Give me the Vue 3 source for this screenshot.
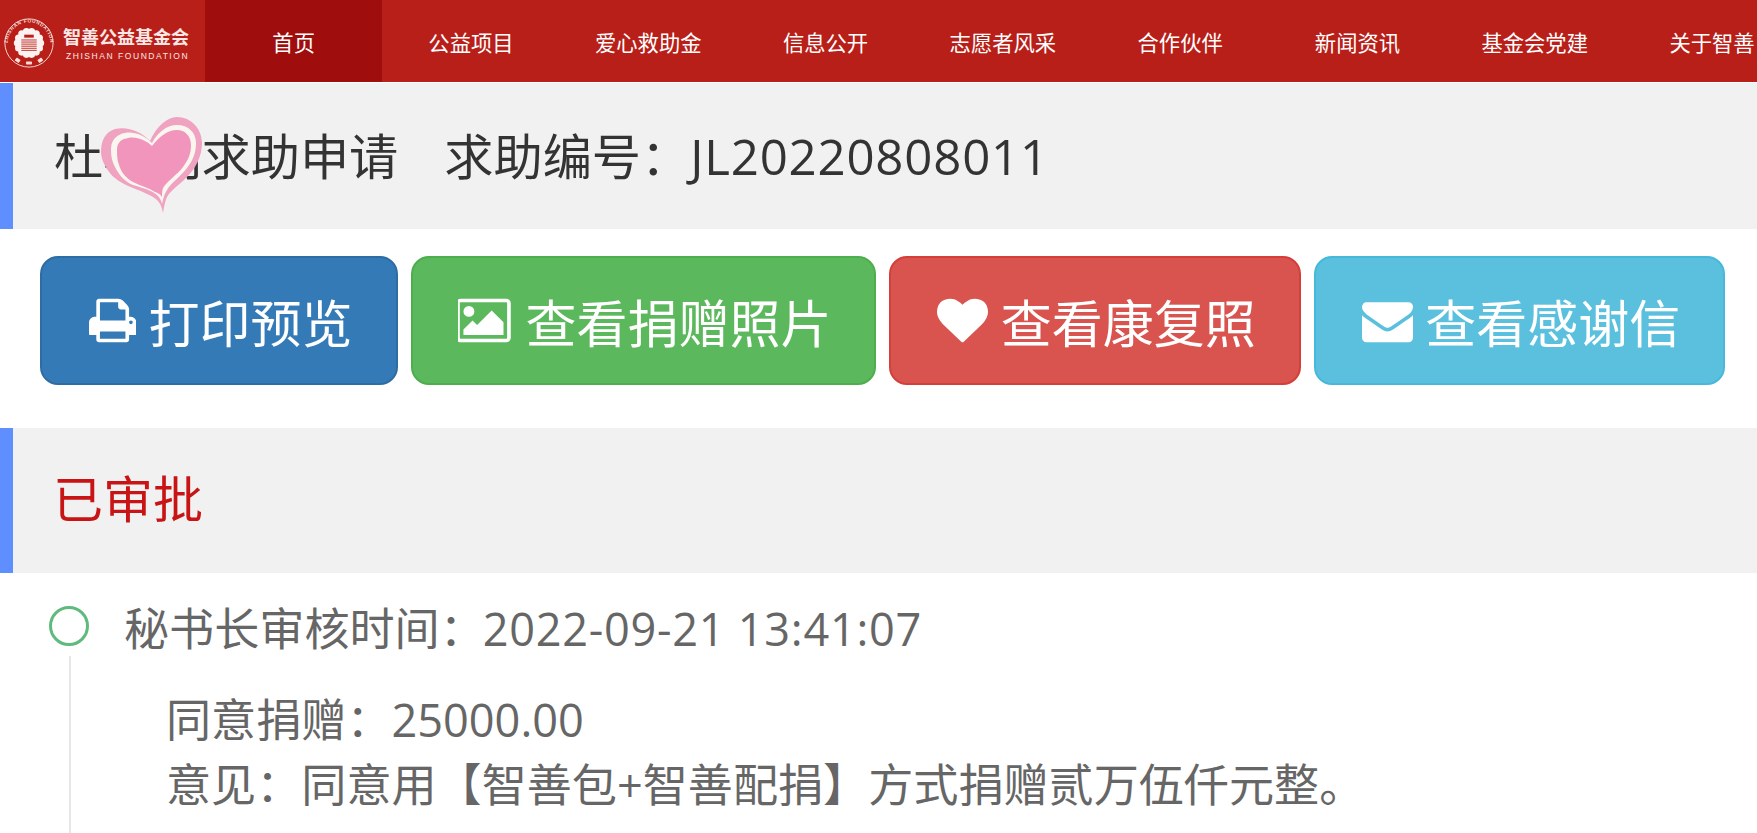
<script setup>
const navItems = ['首页', '公益项目', '爱心救助金', '信息公开', '志愿者风采', '合作伙伴', '新闻资讯', '基金会党建', '关于智善']

const buttons = [
  {
    label: '打印预览',
    type: 'primary',
    box: '64 0 1664 1792',
    width: 47.400,
    d: 'M448 1536h896v-256h-896v256zm0-640h896v-384h-160q-40 0-68-28t-28-68v-160h-640v640zm1152 64q0-26-19-45t-45-19-45 19-19 45 19 45 45 19 45-19 19-45zm128 0v416q0 13-9.500 22.500t-22.500 9.500h-224v160q0 40-28 68t-68 28h-960q-40 0-68-28t-28-68v-160h-224q-13 0-22.500-9.500t-9.500-22.500v-416q0-79 56.500-135.500t135.500-56.500h64v-544q0-40 28-68t68-28h672q40 0 88 20t76 48l152 152q28 28 48 76t20 88v256h64q79 0 135.500 56.500t56.500 135.500z',
  },
  {
    label: '查看捐赠照片',
    type: 'success',
    box: '0 0 1920 1792',
    width: 54.600,
    d: 'M576 576q0 80-56 136t-136 56-136-56-56-136 56-136 136-56 136 56 56 136zm1024 384v448h-1408v-192l320-320 160 160 512-512zm96-704h-1600q-13 0-22.500 9.500t-9.500 22.500v1216q0 13 9.500 22.500t22.500 9.500h1600q13 0 22.500-9.500t9.500-22.500v-1216q0-13-9.500-22.500t-22.500-9.500zm160 32v1216q0 66-47 113t-113 47h-1600q-66 0-113-47t-47-113v-1216q0-66 47-113t113-47h1600q66 0 113 47t47 113z',
  },
  {
    label: '查看康复照',
    type: 'danger',
    box: '0 0 1792 1792',
    width: 51,
    d: 'M896 1664q-26 0-44-18l-624-602q-10-8-27.500-26t-55.500-65.500-68-97.500-53.500-121-23.500-138q0-220 127-344t351-124q62 0 126.500 21.500t120 58 95.500 68.500 76 68q36-36 76-68t95.500-68.500 120-58 126.500-21.500q224 0 351 124t127 344q0 221-229 450l-623 600q-18 18-44 18z',
  },
  {
    label: '查看感谢信',
    type: 'info',
    box: '0 0 1792 1792',
    width: 51,
    d: 'M1792 710v794q0 66-47 113t-113 47h-1472q-66 0-113-47t-47-113v-794q44 49 101 87 362 246 497 345 57 42 92.500 65.500t94.500 48 110 24.500h2q51 0 110-24.500t94.500-48 92.500-65.500q170-123 498-345 57-39 100-87zm0-294q0 79-49 151t-122 123q-376 261-468 325-10 7-42.500 30.500t-54 38-52 32.500-57.500 27-50 9h-2q-23 0-50-9t-57.500-27-52-32.500-54-38-42.500-30.500q-91-64-262-182.500t-205-142.500q-62-42-117-115.500t-55-136.500q0-78 41.500-130t118.500-52h1472q65 0 112.500 47t47.500 113z',
  },
]

// stripes inside the seal
const sealLines = [36, 39.5, 43, 46.5, 50, 53.5]

// scalloped edge of the seal centre
const lobes = Array.from({ length: 14 }, (_, i) => {
  const a = (i / 14) * Math.PI * 2
  return { x: 42 + Math.cos(a) * 19.5, y: 42 + Math.sin(a) * 19.5 }
})
</script>

<template>
  <div class="page">
    <!-- top nav -->
    <header class="nav">
      <div class="logo">
        <svg class="seal" viewBox="0 0 84 84" width="50" height="50">
          <defs>
            <path id="seal-arc" d="M7 52 A36 36 0 1 1 77 52" />
          </defs>
          <circle cx="42" cy="42" r="40.500" fill="none" stroke="#f6dcd8" stroke-width="1.6" />
          <text class="seal-text" fill="#f6dcd8">
            <textPath href="#seal-arc" startOffset="50%" text-anchor="middle">ZHISHAN FOUNDATION</textPath>
          </text>
          <!-- three small stamps at the foot of the ring -->
          <rect x="19" y="68" width="8" height="6" rx="1" fill="#f6dcd8" transform="rotate(35 23 71)" />
          <rect x="37" y="73" width="10" height="5" rx="1" fill="#f6dcd8" />
          <rect x="57" y="68" width="8" height="6" rx="1" fill="#f6dcd8" transform="rotate(-35 61 71)" />
          <circle v-for="(p, i) in lobes" :key="i" :cx="p.x" :cy="p.y" r="6" fill="#fbf3f1" />
          <circle cx="42" cy="42" r="21" fill="#fbf3f1" />
          <rect x="34" y="28" width="16" height="5" fill="#b9201a" />
          <rect v-for="y in sealLines" :key="y" x="29" :y="y" width="26" height="1.800" fill="#c9453f" />
        </svg>
        <div class="logo-words">
          <div class="logo-cn">智善公益基金会</div>
          <div class="logo-en">ZHISHAN FOUNDATION</div>
        </div>
      </div>
      <nav class="nav-list">
        <a v-for="(item, i) in navItems" :key="item" class="nav-item" :class="{ active: i === 0 }">{{ item }}</a>
      </nav>
    </header>

    <!-- title -->
    <section class="band title-band">
      <h1 class="title">杜小明求助申请<span class="title-no">求助编号：<span class="latin">JL20220808011</span></span></h1>
      <svg class="heart" viewBox="0 0 102 97" width="102" height="97">
        <path
          d="M49 24 C55 10 66 0 76 0 C90 0 101 12 101 26 C101 40 94 52 86 60 C78 68 69 74 66 80 C64 84 63 90 62 96 C61 91 60 87 56 83 C50 78 42 75 32 71 C22 67 12 62 6 52 C2 46 0 40 0 35 C0 24 4 15 14 12 C26 9 40 14 49 24 Z"
          fill="#f0a2c1"
        />
        <path
          d="M51 26 C57 15 66 8 76 8 C87 8 95 15 95 26 C95 36 92 43 86 51 C80 59 70 66 66 73 C63 78 62 82 61 87 C60 83 59 81 56 78 C50 73 42 71 32 68 C24 65 18 58 14 50 C11 45 10 39 10 33 C10 25 13 20 20 17 C30 13 42 17 51 26 Z"
          fill="#f9f6f0"
        />
        <path
          d="M51 29 C58 20 66 13 76 13 C84 13 90 19 90 28 C90 36 88 42 82 50 C76 58 66 64 62 71 C61 74 61 77 61 80 C59 77 57 76 54 75 C48 71 40 69 32 65 C25 61 20 55 18 48 C16 43 16 38 16 33 C16 28 18 24 23 22 C33 18 44 22 51 29 Z"
          fill="#f295bc"
        />
      </svg>
    </section>

    <!-- actions -->
    <div class="actions">
      <a v-for="btn in buttons" :key="btn.label" class="btn" :class="'btn-' + btn.type">
        <svg class="btn-icon" :viewBox="btn.box" :width="btn.width" height="51">
          <path :d="btn.d" fill="#fff" />
        </svg>
        <span>{{ btn.label }}</span>
      </a>
    </div>

    <!-- status -->
    <section class="band status-band">
      <h2 class="status">已审批</h2>
    </section>

    <!-- timeline -->
    <div class="timeline">
      <div class="tl-rail">
        <span class="tl-dot"></span>
        <span class="tl-line"></span>
      </div>
      <div class="tl-body">
        <div class="tl-time">秘书长审核时间：<span class="tl-stamp">2022-09-21 13:41:07</span></div>
        <div class="tl-content">
          <p>同意捐赠：25000.00</p>
          <p>意见：同意用【智善包+智善配捐】方式捐赠贰万伍仟元整。</p>
        </div>
      </div>
    </div>
  </div>
</template>

<style>
html,
body {
  margin: 0;
  height: 100%;
  overflow: hidden;
  background: #fff;
}
</style>

<style scoped>
.page {
  width: 1757px;
  height: 833px;
  overflow: hidden;
  font-family: "Open Sans", "Noto Sans CJK SC", sans-serif;
  color: #333;
}

/* nav */
.nav {
  display: flex;
  height: 82px;
  background: #b91f19;
}

.logo {
  flex: 0 0 205px;
  display: flex;
  align-items: center;
  gap: 9px;
  padding-left: 4px;
  box-sizing: border-box;
}

.seal {
  margin-top: 4px;
}

.seal-text {
  font-family: "Liberation Sans", sans-serif;
  font-size: 8px;
  font-weight: 700;
  letter-spacing: 1.1px;
}

.logo-words {
  padding-top: 6px;
  color: #f9e8e5;
  white-space: nowrap;
}

.logo-cn {
  font-size: 18px;
  font-weight: 700;
  line-height: 24px;
}

.logo-en {
  font-family: "Liberation Sans", sans-serif;
  font-size: 8.500px;
  letter-spacing: 1.55px;
  line-height: 14px;
  padding-left: 3px;
}

.nav-list {
  display: flex;
  flex: 1;
  min-width: 0;
  overflow: hidden;
}

.nav-item {
  flex: 0 0 177.3px;
  display: flex;
  align-items: center;
  justify-content: center;
  color: #fff;
  font-size: 21.300px;
  white-space: nowrap;
}

.nav-item.active {
  background: #9f0d0d;
}

/* grey bands with the blue bar on the left */
.band {
  position: relative;
  box-sizing: border-box;
  background: #f1f1f1;
  border-left: 13px solid #5f8fff;
}

.title-band {
  height: 146px;
  margin-top: 1px;
  display: flex;
  align-items: center;
  padding-left: 41px;
  padding-bottom: 1px;
}

.title {
  margin: 0;
  font-size: 49.2px;
  font-weight: 400;
  line-height: 1.2;
  color: #333;
  white-space: nowrap;
}

.title-no {
  margin-left: 46px;
}

.latin {
  letter-spacing: 0.8px;
}

.heart {
  position: absolute;
  left: 88px;
  top: 34px;
}

/* buttons */
.actions {
  display: flex;
  gap: 13px;
  padding: 27px 0 43px 40px;
}

.btn {
  display: flex;
  align-items: center;
  justify-content: center;
  gap: 12.500px;
  height: 129px;
  box-sizing: border-box;
  padding-left: 3px;
  border: 2px solid transparent;
  border-radius: 18px;
  color: #fff;
  font-size: 51px;
  white-space: nowrap;
}

.btn-primary {
  width: 358px;
  background: #337ab7;
  border-color: #2e6da4;
}

.btn-success {
  width: 465px;
  background: #5cb85c;
  border-color: #4cae4c;
}

.btn-danger {
  width: 412px;
  background: #d9534f;
  border-color: #d43f3a;
}

.btn-info {
  width: 411px;
  background: #5bc0de;
  border-color: #46b8da;
}

/* status */
.status-band {
  height: 145px;
  display: flex;
  align-items: center;
  padding-left: 40px;
  padding-bottom: 8px;
}

.status {
  margin: 0;
  font-size: 50px;
  font-weight: 400;
  color: #c81414;
}

/* timeline */
.timeline {
  display: flex;
  padding: 33px 0 0 49px;
  color: #666;
  font-size: 45.100px;
}

.tl-rail {
  flex: 0 0 40px;
  display: flex;
  flex-direction: column;
  align-items: center;
  gap: 10px;
}

.tl-dot {
  width: 40px;
  height: 40px;
  box-sizing: border-box;
  border: 3px solid #5fba7d;
  border-radius: 50%;
}

.tl-line {
  width: 2px;
  height: 180px;
  margin-left: 1px;
  background: #e6e6e6;
}

.tl-body {
  margin-left: 35px;
  margin-top: -8px;
}

.tl-time {
  line-height: 62px;
  white-space: nowrap;
}

.tl-stamp {
  margin-left: -2px;
  letter-spacing: 0.73px;
}

.tl-content {
  margin-top: 27px;
  margin-left: 42px;
}

.tl-content p {
  margin: 0;
  line-height: 65px;
  white-space: nowrap;
}
</style>
